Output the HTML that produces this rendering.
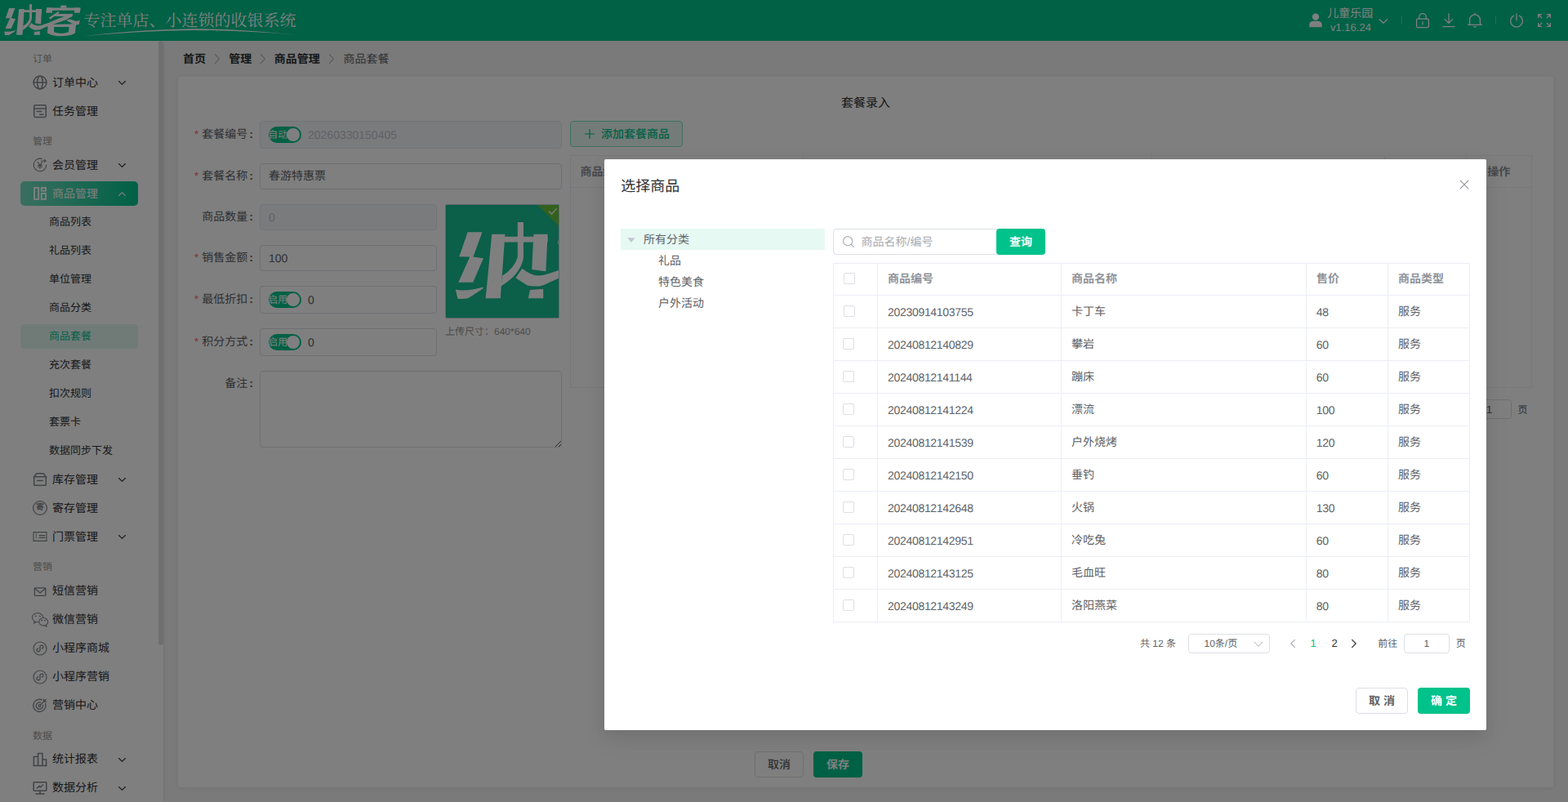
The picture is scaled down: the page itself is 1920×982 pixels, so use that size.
<!DOCTYPE html>
<html lang="zh-CN"><head><meta charset="utf-8"><title>纳客收银系统 - 商品套餐</title>
<style>
*{box-sizing:border-box;margin:0;padding:0}
html,body{width:1920px;height:982px;overflow:hidden}
body{font-family:"Liberation Sans","Noto Sans CJK SC",sans-serif;font-size:14px;color:#303133;background:#f5f5f5;position:relative;text-rendering:geometricPrecision}
.a{position:absolute}
.t{position:absolute;white-space:nowrap;line-height:20px;height:20px}
.n{letter-spacing:-.32px}
svg{position:absolute;overflow:visible}
.ic{fill:none;stroke:#83868b;stroke-width:1.5;stroke-linecap:round;stroke-linejoin:round}
#hdr{left:0;top:0;width:1920px;height:50px;background:#00c28b}
#side{left:0;top:50px;width:200px;height:932px;background:#fff;box-shadow:1px 0 3px rgba(0,0,0,.08)}
#card{left:218px;top:94px;width:1684px;height:870px;background:#fff;border-radius:4px;box-shadow:0 1px 6px rgba(0,0,0,.07)}
.inp{position:absolute;border:1px solid #dcdfe6;border-radius:4px;background:#fff}
.dis{background:#f5f7fa;border-color:#e4e7ed}
.sw{position:absolute;width:40px;height:20px;border-radius:10px;background:#00c28b}
.sw i{position:absolute;right:2px;top:2px;width:16px;height:16px;border-radius:8px;background:#fff}
.sw b{position:absolute;left:-.8px;top:0;line-height:20px;font-size:12px;color:#fff;font-weight:400;white-space:nowrap}
#mask{left:0;top:0;width:1920px;height:982px;background:rgba(0,0,0,.5)}
#dlg{left:740px;top:195px;width:1080px;height:699px;background:#fff;border-radius:2px;box-shadow:0 12px 32px 4px rgba(0,0,0,.04),0 8px 20px rgba(0,0,0,.08)}
.vl{position:absolute;width:1px;background:#ebeef5}
.hl{position:absolute;height:1px;background:#ebeef5}
.cb{position:absolute;width:14px;height:14px;border:1px solid #dcdfe6;border-radius:2px;background:#fff}
.btn{position:absolute;border-radius:4px;text-align:center;font-size:14px;white-space:nowrap}
</style></head>
<body>
<div id="hdr" class="a">
<svg width="380" height="50" viewBox="0 0 380 50" style="left:0;top:0"><g fill="#fff">
<path d="M11.1,10L18.4,10L13.9,22.3L19,23L13.8,34.9L6.5,34.9L12.2,22.3L6.9,22.2Z"/>
<path d="M5.1,38.5Q10.5,39.6 18.8,37.2L18.8,38Q14,41.3 11.3,42.8Q8.5,43.3 6.1,43Z"/>
<path d="M23.2,11L29.8,11L27.5,42.8L20.1,42.8Z"/>
<path d="M23.2,12.2H51.1V15H23.2Z"/>
<path d="M36.1,5.1H39V22.9H36.1Z"/>
<path d="M36.1,22.4L39,22.9Q37.5,31 27.9,36.7L28.3,31.8Q34.5,28 36.1,22.4Z"/>
<path d="M44.1,11L51.1,11L50.2,29.5L43.2,28.5Z"/>
<path d="M42.3,38.7L48.9,38.2L48.9,42.8L41.4,42.8Z"/>
<path d="M66.7,17L88.9,17L88.9,19.7L81.3,24.1L70.3,28L58.6,32L52,34.9Q49,36.6 46.5,36.8Q43.5,37 41,36.4L35.1,32.7L38.4,28Q40.3,29.5 42.1,30.5Q44.3,31.6 46.5,31.6Q49,31.5 52,30.5L59.3,28L66.7,24.7L78.8,20.1L66.7,20.1Z"/>
<path d="M74.2,6.6H81.4V9.7H74.2Z"/>
<path d="M57.2,9.4H98.4V12.7H57.2Z"/>
<path d="M57.2,9.4L64,9.4L64,15.8L56.2,15.8Z"/>
<path d="M91.3,9.4L98.4,9.4L97.9,15.8L91,15.8Z"/>
<path d="M71.4,14L72.8,15.6L61.5,23.8L60.1,21.5Z"/>
<path d="M81.3,24.7Q84,23.5 86.8,23.8Q89.5,24.7 92.3,25.7Q95,25.9 97.9,25.1L96.7,29.7L93.1,30.6L88.7,29.2Q85,26.6 81.3,24.9Z"/>
<path fill-rule="evenodd" d="M58.6,30L93.1,29.3L92,40.4Q88.7,42.7 82,43.8Q75.8,44.5 69,44Q63,43.2 58,40.4ZM66.1,33L84.6,33L83.9,39.3Q79.5,40.9 75.3,40.9Q70.5,40.8 66.1,39.3Z"/>
<text x="102.5" y="31.5" font-size="20" fill="#fff" font-family="'Liberation Serif','Noto Serif CJK SC',serif">专注单店、小连锁的收银系统</text>
<path d="M100,44.4Q170,36 236,35.2Q300,35.4 364,42.9Q300,37.2 236,36.9Q170,37.8 100,44.4Z"/>
</g></svg>
<svg width="16" height="18" viewBox="0 0 16 18" style="left:1603px;top:16px"><g fill="#fff"><circle cx="8" cy="4.6" r="4.2"/><path d="M0.3,17.2V14.6Q0.3,10.2 5,9.8H11Q15.7,10.2 15.7,14.6V17.2Z"/></g></svg>
<div class="t" style="left:1625.3px;top:5.6px;color:#fff;">儿童乐园</div><div class="t" style="left:1629px;top:23.5px;font-size:13px;color:#fff;">v1.16.24</div><svg width="12" height="8" viewBox="0 0 12 8" style="left:1688px;top:21.5px"><path d="M1.3,1.8L6,6.2L10.7,1.8" fill="none" stroke="#fff" stroke-width="1.3" stroke-linecap="round" stroke-linejoin="round"/></svg>
<div class="a" style="left:1716px;top:20px;width:1px;height:10px;background:rgba(255,255,255,.35)"></div><div class="a" style="left:1831px;top:20px;width:1px;height:10px;background:rgba(255,255,255,.35)"></div>
<svg width="18" height="20" viewBox="0 0 18 20" style="left:1733px;top:15px"><g fill="none" stroke="#fff" stroke-width="1.3" stroke-linecap="round" stroke-linejoin="round"><rect x="1.6" y="8.2" width="14.8" height="10.4" rx="1.6"/><path d="M4.8,8V5.8A4.2,4.2 0 0 1 13.2,5.8V8"/><path d="M9,11.8V14.8"/></g></svg>
<svg width="16" height="18" viewBox="0 0 16 18" style="left:1766px;top:16px"><g fill="none" stroke="#fff" stroke-width="1.3" stroke-linecap="round" stroke-linejoin="round"><path d="M8,1V12.2M3.2,7.6L8,12.4L12.8,7.6M1,16.6H15"/></g></svg>
<svg width="20" height="20" viewBox="0 0 20 20" style="left:1796px;top:15px"><g fill="none" stroke="#fff" stroke-width="1.3" stroke-linecap="round" stroke-linejoin="round"><path d="M10,1.2V2.6M3.6,15.2V9.2A6.4,6.4 0 0 1 16.4,9.2V15.2M1.6,15.4H18.4M8.6,17.6Q10,18.8 11.4,17.6"/></g></svg>
<svg width="18" height="18" viewBox="0 0 18 18" style="left:1848px;top:16px"><g fill="none" stroke="#fff" stroke-width="1.3" stroke-linecap="round" stroke-linejoin="round"><path d="M9,1V9M5.6,3.2A7.4,7.4 0 1 0 12.4,3.2"/></g></svg>
<svg width="18" height="18" viewBox="0 0 18 18" style="left:1882px;top:16px"><g fill="none" stroke="#fff" stroke-width="1.3" stroke-linecap="round" stroke-linejoin="round"><path d="M1.6,5.6V1.6H5.6M1.6,1.6L5.8,5.8M12.4,1.6H16.4V5.6M16.4,1.6L12.2,5.8M1.6,12.4V16.4H5.6M1.6,16.4L5.8,12.2M16.4,12.4V16.4H12.4M16.4,16.4L12.2,12.2"/></g></svg>
</div>
<div id="side" class="a">
<div class="t" style="left:40px;top:12px;font-size:12px;color:#999;">订单</div><svg class="ic" width="18" height="18" viewBox="0 0 18 18" style="left:40px;top:42.2px"><circle cx="9" cy="9" r="7.9"/><ellipse cx="9" cy="9" rx="3.3" ry="7.9"/><path d="M1.2,9H16.8"/></svg><div class="t" style="left:64px;top:40.9px;">订单中心</div><svg width="11" height="7" viewBox="0 0 11 7" style="left:143.5px;top:48.1px"><path d="M1.6,1.5L5.5,5.4L9.4,1.5" fill="none" stroke="#303133" stroke-width="1.1" stroke-linecap="round" stroke-linejoin="round"/></svg>
<svg class="ic" width="18" height="18" viewBox="0 0 18 18" style="left:40px;top:77.2px"><rect x="1.7" y="1.8" width="14.6" height="14.6" rx="1.6"/><path d="M1.7,6H16.3M5.2,9.5H10.6M8.8,13.2H13.2"/></svg><div class="t" style="left:64px;top:75.9px;">任务管理</div>
<div class="t" style="left:40px;top:112.9px;font-size:12px;color:#999;">管理</div><svg class="ic" width="18" height="18" viewBox="0 0 18 18" style="left:40px;top:142.8px"><path d="M11,1.4A7.8,7.8 0 1 0 16.8,9" stroke-width="1.1"/><path d="M6.4,5.6L9,9.2L11.6,5.6M9,9.2V13.2M6.6,9.4H11.4M6.6,11.2H11.4M10.4,4H16M14.4,2.6L16,4L14.4,5.4" stroke-width="1.1"/></svg><div class="t" style="left:64px;top:141.5px;">会员管理</div><svg width="11" height="7" viewBox="0 0 11 7" style="left:143.5px;top:148.7px"><path d="M1.6,1.5L5.5,5.4L9.4,1.5" fill="none" stroke="#303133" stroke-width="1.1" stroke-linecap="round" stroke-linejoin="round"/></svg>
<div class="a" style="left:25px;top:172px;width:144px;height:30px;border-radius:5px;background:linear-gradient(90deg,#74dec0,#00c28b)"></div><svg class="ic" width="18" height="18" viewBox="0 0 18 18" style="stroke:#fff;left:40px;top:178px"><rect x="2" y="1.9" width="5.2" height="14" stroke-width="1.9" stroke-linejoin="miter"/><rect x="10.8" y="1.9" width="5.2" height="3.8" stroke-width="1.9" stroke-linejoin="miter"/><rect x="10.8" y="8.9" width="5.2" height="7" stroke-width="1.9" stroke-linejoin="miter"/></svg><div class="t" style="left:64px;top:176.6px;color:#fff;">商品管理</div><svg width="11" height="7" viewBox="0 0 11 7" style="left:143.5px;top:183.5px"><path d="M1.6,5.5L5.5,1.6L9.4,5.5" fill="none" stroke="#fff" stroke-width="1.1" stroke-linecap="round" stroke-linejoin="round"/></svg>
<div class="t" style="left:60px;top:212.4px;font-size:13px;">商品列表</div>
<div class="t" style="left:60px;top:247.4px;font-size:13px;">礼品列表</div>
<div class="t" style="left:60px;top:282.4px;font-size:13px;">单位管理</div>
<div class="t" style="left:60px;top:317.4px;font-size:13px;">商品分类</div>
<div class="a" style="left:25px;top:347px;width:144px;height:30px;border-radius:4px;background:#e1f7f0"></div><div class="t" style="left:60px;top:352.4px;font-size:13px;color:#00c28b;">商品套餐</div>
<div class="t" style="left:60px;top:387.4px;font-size:13px;">充次套餐</div>
<div class="t" style="left:60px;top:422.4px;font-size:13px;">扣次规则</div>
<div class="t" style="left:60px;top:457.4px;font-size:13px;">套票卡</div>
<div class="t" style="left:60px;top:492.4px;font-size:13px;">数据同步下发</div>
<svg class="ic" width="18" height="18" viewBox="0 0 18 18" style="left:40px;top:528.3px"><path d="M1.7,5.8L4.9,1.8H13.1L16.3,5.8M1.2,5.8H16.8M1.7,5.8V15.4Q1.7,16.2 2.5,16.2H15.5Q16.3,16.2 16.3,15.4V5.8M5.8,10.6H12.2"/></svg><div class="t" style="left:64px;top:527px;">库存管理</div><svg width="11" height="7" viewBox="0 0 11 7" style="left:143.5px;top:534.2px"><path d="M1.6,1.5L5.5,5.4L9.4,1.5" fill="none" stroke="#303133" stroke-width="1.1" stroke-linecap="round" stroke-linejoin="round"/></svg>
<svg class="ic" width="18" height="18" viewBox="0 0 18 18" style="left:40px;top:563.3px"><circle cx="9" cy="9" r="8.4" stroke-width="1.2"/></svg><div class="t" style="left:44px;top:562.1px;font-size:10px;color:#85888d;font-weight:700;">寄</div><div class="t" style="left:64px;top:562px;">寄存管理</div>
<svg class="ic" width="18" height="18" viewBox="0 0 18 18" style="left:40px;top:598.3px"><path d="M1,3.6H3.6Q4.4,4.6 5.2,3.6H17V14.4H5.2Q4.4,13.4 3.6,14.4H1Z" stroke-width="1.1"/><path d="M4.4,6V12" stroke-width="1" stroke-dasharray="1.6 1.4"/><path d="M8,7.6H15M8,10.4H15" stroke-width="1.1"/></svg><div class="t" style="left:64px;top:597px;">门票管理</div><svg width="11" height="7" viewBox="0 0 11 7" style="left:143.5px;top:604.2px"><path d="M1.6,1.5L5.5,5.4L9.4,1.5" fill="none" stroke="#303133" stroke-width="1.1" stroke-linecap="round" stroke-linejoin="round"/></svg>
<div class="t" style="left:40px;top:634.1px;font-size:12px;color:#999;">营销</div><svg class="ic" width="18" height="18" viewBox="0 0 18 18" style="left:40px;top:664.7px"><g stroke-width="1.35"><rect x="2.4" y="4.9" width="13.4" height="9.4" rx="0.6"/><path d="M2.7,5.6L9.1,10.9L15.5,5.6"/></g></svg><div class="t" style="left:64px;top:663.4px;">短信营销</div>
<svg class="ic" width="20" height="18" viewBox="0 0 20 18" style="left:39px;top:699.7px"><g stroke-width="1.05"><ellipse cx="7.1" cy="6.1" rx="6.6" ry="5.6"/><path d="M3.3,10.7L2.6,13.2L5.4,11.6" /><ellipse cx="14.2" cy="11.2" rx="5.5" ry="4.8" fill="#fff"/><path d="M17.4,15.1L18.2,17.2L15.6,15.9" fill="#fff"/></g><path d="M4.3,4.4H5.3M9.4,4.4H10.4M11.8,9.5H12.6M15.8,9.5H16.6" stroke-width="1.4"/></svg><div class="t" style="left:64px;top:698.4px;">微信营销</div>
<svg class="ic" width="18" height="18" viewBox="0 0 18 18" style="left:40px;top:734.7px"><circle cx="9" cy="9" r="8" stroke-width="1.2"/><path d="M9,11V7.2A2,2 0 0 1 13,7.2Q13,8.8 11.4,9M9,7V10.8A2,2 0 0 1 5,10.8Q5,9.2 6.6,9" stroke-width="1.3"/></svg><div class="t" style="left:64px;top:733.4px;">小程序商城</div>
<svg class="ic" width="18" height="18" viewBox="0 0 18 18" style="left:40px;top:769.7px"><circle cx="9" cy="9" r="8" stroke-width="1.2"/><path d="M9,11V7.2A2,2 0 0 1 13,7.2Q13,8.8 11.4,9M9,7V10.8A2,2 0 0 1 5,10.8Q5,9.2 6.6,9" stroke-width="1.3"/></svg><div class="t" style="left:64px;top:768.4px;">小程序营销</div>
<svg class="ic" width="18" height="18" viewBox="0 0 18 18" style="left:40px;top:804.7px"><path d="M15.6,6.4A7.6,7.6 0 1 1 11.4,1.9" stroke-width="1.3"/><path d="M12.6,8.4A4.2,4.2 0 1 1 9.4,5" stroke-width="1.3"/><circle cx="8.5" cy="9.2" r="1.3" stroke-width="1.2"/><path d="M9.4,8.2L16.4,1.4M13.6,1.2V4.2H16.6" stroke-width="1.3"/></svg><div class="t" style="left:64px;top:803.4px;">营销中心</div>
<div class="t" style="left:40px;top:840.8px;font-size:12px;color:#999;">数据</div><svg class="ic" width="18" height="18" viewBox="0 0 18 18" style="left:40px;top:870.7px"><path d="M1.4,16.4V5.6H6.6V16.4M6.6,16.4V1.6H12V16.4M12,16.4V9H16.6V16.4M1,16.4H17"/></svg><div class="t" style="left:64px;top:869.4px;">统计报表</div><svg width="11" height="7" viewBox="0 0 11 7" style="left:143.5px;top:876.6px"><path d="M1.6,1.5L5.5,5.4L9.4,1.5" fill="none" stroke="#303133" stroke-width="1.1" stroke-linecap="round" stroke-linejoin="round"/></svg>
<svg class="ic" width="18" height="18" viewBox="0 0 18 18" style="left:40px;top:905.7px"><rect x="1.2" y="1.8" width="15.6" height="10.4" rx="0.6"/><path d="M9,12.4V15.6M4,16H14M5.4,9L8.2,6.4L9.4,8L12.6,5"/></svg><div class="t" style="left:64px;top:904.4px;">数据分析</div><svg width="11" height="7" viewBox="0 0 11 7" style="left:143.5px;top:911.6px"><path d="M1.6,1.5L5.5,5.4L9.4,1.5" fill="none" stroke="#303133" stroke-width="1.1" stroke-linecap="round" stroke-linejoin="round"/></svg>
<div class="a" style="left:194px;top:0;width:6px;height:740px;border-radius:3px;background:rgba(144,147,153,.3)"></div>
</div>
<div class="t" style="left:224px;top:61.5px;font-weight:700;">首页</div><svg width="8" height="14" viewBox="0 0 8 14" style="left:262px;top:64.5px"><path d="M1.4,1.6L6.4,7L1.4,12.4" fill="none" stroke="#a8abb2" stroke-width="1.1" stroke-linecap="round" stroke-linejoin="round"/></svg><div class="t" style="left:280.3px;top:61.5px;font-weight:700;">管理</div><svg width="8" height="14" viewBox="0 0 8 14" style="left:318px;top:64.5px"><path d="M1.4,1.6L6.4,7L1.4,12.4" fill="none" stroke="#a8abb2" stroke-width="1.1" stroke-linecap="round" stroke-linejoin="round"/></svg><div class="t" style="left:335.8px;top:61.5px;font-weight:700;">商品管理</div><svg width="8" height="14" viewBox="0 0 8 14" style="left:402.3px;top:64.5px"><path d="M1.4,1.6L6.4,7L1.4,12.4" fill="none" stroke="#a8abb2" stroke-width="1.1" stroke-linecap="round" stroke-linejoin="round"/></svg><div class="t" style="left:420.4px;top:61.5px;color:#606266;">商品套餐</div>
<div id="card" class="a"></div>
<div class="t" style="left:1030px;top:116.8px;font-size:15px;">套餐录入</div><div class="t" style="left:218px;width:92px;text-align:right;top:153.7px;color:#606266"><span style="color:#f56c6c;margin-right:4px">*</span>套餐编号<span style="margin-left:2.1px;font-weight:700">:</span></div><div class="inp dis" style="left:318px;top:148px;width:370px;height:34px"></div><div class="sw" style="left:329px;top:155px"><b>自动</b><i></i></div><div class="t" style="left:377px;top:155px;color:#c0c4cc;">20260330150405</div>
<div class="t" style="left:218px;width:92px;text-align:right;top:204.9px;color:#606266"><span style="color:#f56c6c;margin-right:4px">*</span>套餐名称<span style="margin-left:2.1px;font-weight:700">:</span></div><div class="inp" style="left:318px;top:200px;width:370px;height:32px"></div><div class="t" style="left:329px;top:205.2px;color:#606266;">春游特惠票</div>
<div class="t" style="left:218px;width:92px;text-align:right;top:254.9px;color:#606266">商品数量<span style="margin-left:2.1px;font-weight:700">:</span></div><div class="inp dis" style="left:318px;top:250px;width:217px;height:32px"></div><div class="t" style="left:329px;top:256px;color:#c0c4cc;">0</div>
<div class="t" style="left:218px;width:92px;text-align:right;top:304.9px;color:#606266"><span style="color:#f56c6c;margin-right:4px">*</span>销售金额<span style="margin-left:2.1px;font-weight:700">:</span></div><div class="inp" style="left:318px;top:300px;width:217px;height:32px"></div><div class="t" style="left:329px;top:306px;color:#606266;">100</div>
<div class="t" style="left:218px;width:92px;text-align:right;top:355.9px;color:#606266"><span style="color:#f56c6c;margin-right:4px">*</span>最低折扣<span style="margin-left:2.1px;font-weight:700">:</span></div><div class="inp" style="left:318px;top:350px;width:217px;height:34px"></div><div class="sw" style="left:329px;top:357px"><b>启用</b><i></i></div><div class="t" style="left:377px;top:357px;color:#606266;">0</div>
<div class="t" style="left:218px;width:92px;text-align:right;top:407.9px;color:#606266"><span style="color:#f56c6c;margin-right:4px">*</span>积分方式<span style="margin-left:2.1px;font-weight:700">:</span></div><div class="inp" style="left:318px;top:402px;width:217px;height:34px"></div><div class="sw" style="left:329px;top:409px"><b>启用</b><i></i></div><div class="t" style="left:377px;top:409px;color:#606266;">0</div>
<div class="t" style="left:218px;width:92px;text-align:right;top:458.9px;color:#606266">备注<span style="margin-left:2.1px;font-weight:700">:</span></div><div class="inp" style="left:318px;top:454px;width:370px;height:94px"></div><svg width="10" height="10" viewBox="0 0 10 10" style="left:678.5px;top:538.5px"><path d="M8,1L1,8M8,5L5,8" stroke="#555" stroke-width="1" fill="none"/></svg>
<div class="a" style="left:545px;top:250px;width:140px;height:140px;border:1px solid #c0ccda;border-radius:2px;overflow:hidden;background:#18be92"><svg width="138" height="138" viewBox="546 251 138 138" style="left:0;top:0"><g fill="#fff" transform="translate(545.4,259.5) scale(2.45,2.47)"><path d="M11.1,10L18.4,10L13.9,22.3L19,23L13.8,34.9L6.5,34.9L12.2,22.3L6.9,22.2Z"/>
<path d="M5.1,38.5Q10.5,39.6 18.8,37.2L18.8,38Q14,41.3 11.3,42.8Q8.5,43.3 6.1,43Z"/>
<path d="M23.2,11L29.8,11L27.5,42.8L20.1,42.8Z"/><path d="M23.2,12.2H51.1V15H23.2Z"/><path d="M36.1,5.1H39V22.9H36.1Z"/>
<path d="M36.1,22.4L39,22.9Q37.5,31 27.9,36.7L28.3,31.8Q34.5,28 36.1,22.4Z"/><path d="M44.1,11L51.1,11L50.2,29.5L43.2,28.5Z"/>
<path d="M42.3,38.7L48.9,38.2L48.9,42.8L41.4,42.8Z"/>
<path d="M66.7,17L88.9,17L88.9,19.7L81.3,24.1L70.3,28L58.6,32L52,34.9Q49,36.6 46.5,36.8Q43.5,37 41,36.4L35.1,32.7L38.4,28Q40.3,29.5 42.1,30.5Q44.3,31.6 46.5,31.6Q49,31.5 52,30.5L59.3,28L66.7,24.7L78.8,20.1L66.7,20.1Z"/>
<path d="M57.2,9.4L64,9.4L64,15.8L56.2,15.8Z"/></g><path d="M658.5,251H684V276.5Z" fill="#67c23a"/><path d="M672,258.4L675.6,262L681.6,255.2" fill="none" stroke="#fff" stroke-width="1.2"/></svg></div>
<div class="t" style="left:545px;top:395.6px;font-size:12px;color:#999;">上传尺寸：640*640</div><div class="btn" style="left:698px;top:148px;width:138px;height:32px;border:1px solid #80e1c5;background:#e6f9f3"></div><svg width="14" height="14" viewBox="0 0 14 14" style="left:715px;top:157px"><path d="M7,1V13M1,7H13" stroke="#00c28b" stroke-width="1.2" fill="none"/></svg><div class="t" style="left:736px;top:154px;color:#00c28b;font-weight:500;">添加套餐商品</div>
<div class="a" style="left:698px;top:190px;width:1178px;height:285px;border:1px solid #ebeef5"></div><div class="hl" style="left:698px;top:229px;width:1178px"></div><div class="vl" style="left:983px;top:190px;height:40px"></div><div class="vl" style="left:1410px;top:190px;height:40px"></div><div class="vl" style="left:1695px;top:190px;height:40px"></div><div class="vl" style="left:1795px;top:190px;height:40px"></div><div class="t" style="left:710.6px;top:199.6px;color:#909399;font-weight:700;">商品编号</div><div class="t" style="left:1821.3px;top:199.6px;color:#909399;font-weight:700;">操作</div>
<div class="inp" style="left:1795px;top:489px;width:56px;height:24px"></div><div class="t" style="left:1820px;top:491.5px;font-size:13px;color:#606266;">1</div><div class="t" style="left:1858.6px;top:491.6px;font-size:12px;color:#606266;">页</div>
<div class="btn" style="left:924px;top:920px;width:60px;height:32px;border:1px solid #dcdfe6;background:#fff;line-height:30px;color:#606266;font-weight:500">取消</div><div class="btn" style="left:996px;top:920px;width:60px;height:32px;background:#00c28b;line-height:32px;color:#fff;font-weight:700">保存</div>
<div id="mask" class="a"></div>
<div id="dlg" class="a">
<div class="t" style="left:20.299999999999955px;top:22.5px;font-size:18px;">选择商品</div><svg width="12" height="12" viewBox="0 0 12 12" style="left:1047px;top:25px"><path d="M1.2,1.2L10.8,10.8M10.8,1.2L1.2,10.8" stroke="#909399" stroke-width="1.1" stroke-linecap="round" fill="none"/></svg>
<div class="a" style="left:20px;top:85px;width:250px;height:26px;background:#e6f9f3"></div><svg width="10" height="6" viewBox="0 0 10 6" style="left:28px;top:96px"><path d="M0.4,0.3H9.6L5,5.8Z" fill="#c0c4cc"/></svg><div class="t" style="left:48px;top:87.6px;color:#606266;">所有分类</div><div class="t" style="left:66px;top:113.8px;color:#606266;">礼品</div><div class="t" style="left:66px;top:139.7px;color:#606266;">特色美食</div><div class="t" style="left:66px;top:165.8px;color:#606266;">户外活动</div>
<div class="inp" style="left:280px;top:85px;width:202px;height:32px;border-radius:4px 0 0 4px"></div><svg width="16" height="16" viewBox="0 0 16 16" style="left:291px;top:93px"><circle cx="7.2" cy="7.2" r="5.6" fill="none" stroke="#a8abb2" stroke-width="1.1"/><path d="M11.4,11.4L14.4,14.4" stroke="#a8abb2" stroke-width="1.1" stroke-linecap="round"/></svg><div class="t" style="left:314.5px;top:90.6px;color:#a8abb2;">商品名称/编号</div><div class="btn" style="left:480px;top:85px;width:60px;height:32px;background:#00c28b;line-height:32px;color:#fff;font-weight:700">查询</div>
<div class="a" style="left:280px;top:127px;width:780px;height:440px;border:1px solid #ebeef5"></div><div class="vl" style="left:334px;top:127px;height:439px"></div><div class="vl" style="left:559px;top:127px;height:439px"></div><div class="vl" style="left:859px;top:127px;height:439px"></div><div class="vl" style="left:959px;top:127px;height:439px"></div><div class="hl" style="left:280px;top:166px;width:780px"></div><div class="hl" style="left:280px;top:206px;width:780px"></div><div class="hl" style="left:280px;top:246px;width:780px"></div><div class="hl" style="left:280px;top:286px;width:780px"></div><div class="hl" style="left:280px;top:326px;width:780px"></div><div class="hl" style="left:280px;top:366px;width:780px"></div><div class="hl" style="left:280px;top:406px;width:780px"></div><div class="hl" style="left:280px;top:446px;width:780px"></div><div class="hl" style="left:280px;top:486px;width:780px"></div><div class="hl" style="left:280px;top:526px;width:780px"></div>
<div class="cb" style="left:293px;top:139px"></div><div class="t" style="left:347px;top:136.2px;color:#909399;font-weight:700;">商品编号</div><div class="t" style="left:572px;top:136.2px;color:#909399;font-weight:700;">商品名称</div><div class="t" style="left:872px;top:136.2px;color:#909399;font-weight:700;">售价</div><div class="t" style="left:972px;top:136.2px;color:#909399;font-weight:700;">商品类型</div>
<div class="cb" style="left:293px;top:179px"></div><div class="t n" style="left:347.0999999999999px;top:176.7px;color:#606266;">20230914103755</div><div class="t" style="left:572px;top:175.9px;color:#606266;">卡丁车</div><div class="t n" style="left:871.8px;top:176.7px;color:#606266;">48</div><div class="t" style="left:972px;top:175.9px;color:#606266;">服务</div>
<div class="cb" style="left:292px;top:219px"></div><div class="t n" style="left:347.0999999999999px;top:216.7px;color:#606266;">20240812140829</div><div class="t" style="left:572px;top:215.9px;color:#606266;">攀岩</div><div class="t n" style="left:871.8px;top:216.7px;color:#606266;">60</div><div class="t" style="left:972px;top:215.9px;color:#606266;">服务</div>
<div class="cb" style="left:292px;top:259px"></div><div class="t n" style="left:347.0999999999999px;top:256.7px;color:#606266;">20240812141144</div><div class="t" style="left:572px;top:255.9px;color:#606266;">蹦床</div><div class="t n" style="left:871.8px;top:256.7px;color:#606266;">60</div><div class="t" style="left:972px;top:255.9px;color:#606266;">服务</div>
<div class="cb" style="left:292px;top:299px"></div><div class="t n" style="left:347.0999999999999px;top:296.7px;color:#606266;">20240812141224</div><div class="t" style="left:572px;top:295.9px;color:#606266;">漂流</div><div class="t n" style="left:871.8px;top:296.7px;color:#606266;">100</div><div class="t" style="left:972px;top:295.9px;color:#606266;">服务</div>
<div class="cb" style="left:292px;top:339px"></div><div class="t n" style="left:347.0999999999999px;top:336.7px;color:#606266;">20240812141539</div><div class="t" style="left:572px;top:335.9px;color:#606266;">户外烧烤</div><div class="t n" style="left:871.8px;top:336.7px;color:#606266;">120</div><div class="t" style="left:972px;top:335.9px;color:#606266;">服务</div>
<div class="cb" style="left:292px;top:379px"></div><div class="t n" style="left:347.0999999999999px;top:376.7px;color:#606266;">20240812142150</div><div class="t" style="left:572px;top:375.9px;color:#606266;">垂钓</div><div class="t n" style="left:871.8px;top:376.7px;color:#606266;">60</div><div class="t" style="left:972px;top:375.9px;color:#606266;">服务</div>
<div class="cb" style="left:292px;top:419px"></div><div class="t n" style="left:347.0999999999999px;top:416.7px;color:#606266;">20240812142648</div><div class="t" style="left:572px;top:415.9px;color:#606266;">火锅</div><div class="t n" style="left:871.8px;top:416.7px;color:#606266;">130</div><div class="t" style="left:972px;top:415.9px;color:#606266;">服务</div>
<div class="cb" style="left:292px;top:459px"></div><div class="t n" style="left:347.0999999999999px;top:456.7px;color:#606266;">20240812142951</div><div class="t" style="left:572px;top:455.9px;color:#606266;">冷吃兔</div><div class="t n" style="left:871.8px;top:456.7px;color:#606266;">60</div><div class="t" style="left:972px;top:455.9px;color:#606266;">服务</div>
<div class="cb" style="left:292px;top:499px"></div><div class="t n" style="left:347.0999999999999px;top:496.7px;color:#606266;">20240812143125</div><div class="t" style="left:572px;top:495.9px;color:#606266;">毛血旺</div><div class="t n" style="left:871.8px;top:496.7px;color:#606266;">80</div><div class="t" style="left:972px;top:495.9px;color:#606266;">服务</div>
<div class="cb" style="left:292px;top:539px"></div><div class="t n" style="left:347.0999999999999px;top:536.7px;color:#606266;">20240812143249</div><div class="t" style="left:572px;top:535.9px;color:#606266;">洛阳燕菜</div><div class="t n" style="left:871.8px;top:536.7px;color:#606266;">80</div><div class="t" style="left:972px;top:535.9px;color:#606266;">服务</div>
<div class="t" style="left:656px;top:583.2px;font-size:12px;color:#606266;">共 12 条</div><div class="inp" style="left:715px;top:581px;width:100px;height:24px"></div><div class="t" style="left:734.5px;top:582.9px;font-size:12px;color:#606266;">10条/页</div><svg width="12" height="8" viewBox="0 0 12 8" style="left:795px;top:589.5px"><path d="M1,1.2L6,6.4L11,1.2" fill="none" stroke="#a8abb2" stroke-width="1" stroke-linecap="round" stroke-linejoin="round"/></svg><svg width="8" height="12" viewBox="0 0 8 12" style="left:839px;top:587.2px"><path d="M6.4,1.4L1.8,6L6.4,10.6" fill="none" stroke="#a8abb2" stroke-width="1.1" stroke-linecap="round" stroke-linejoin="round"/></svg><div class="t" style="left:864.5999999999999px;top:583.2px;font-size:13px;color:#00c28b;font-weight:500;">1</div><div class="t" style="left:890.5999999999999px;top:583.2px;font-size:13px;">2</div><svg width="8" height="12" viewBox="0 0 8 12" style="left:914px;top:587.2px"><path d="M1.6,1.4L6.2,6L1.6,10.6" fill="none" stroke="#303133" stroke-width="1.2" stroke-linecap="round" stroke-linejoin="round"/></svg><div class="t" style="left:947.3px;top:583.2px;font-size:12px;color:#606266;">前往</div><div class="inp" style="left:979px;top:581px;width:56px;height:24px"></div><div class="t" style="left:1003.5999999999999px;top:582.6px;font-size:12px;color:#606266;">1</div><div class="t" style="left:1042.8px;top:583.2px;font-size:12px;color:#606266;">页</div>
<div class="btn" style="left:920px;top:647px;width:64px;height:32px;border:1px solid #dcdfe6;background:#fff;line-height:30px;color:#606266;font-weight:700">取 消</div><div class="btn" style="left:996px;top:647px;width:64px;height:32px;background:#00c28b;line-height:32px;color:#fff;font-weight:700">确 定</div>
</div>
</body></html>
